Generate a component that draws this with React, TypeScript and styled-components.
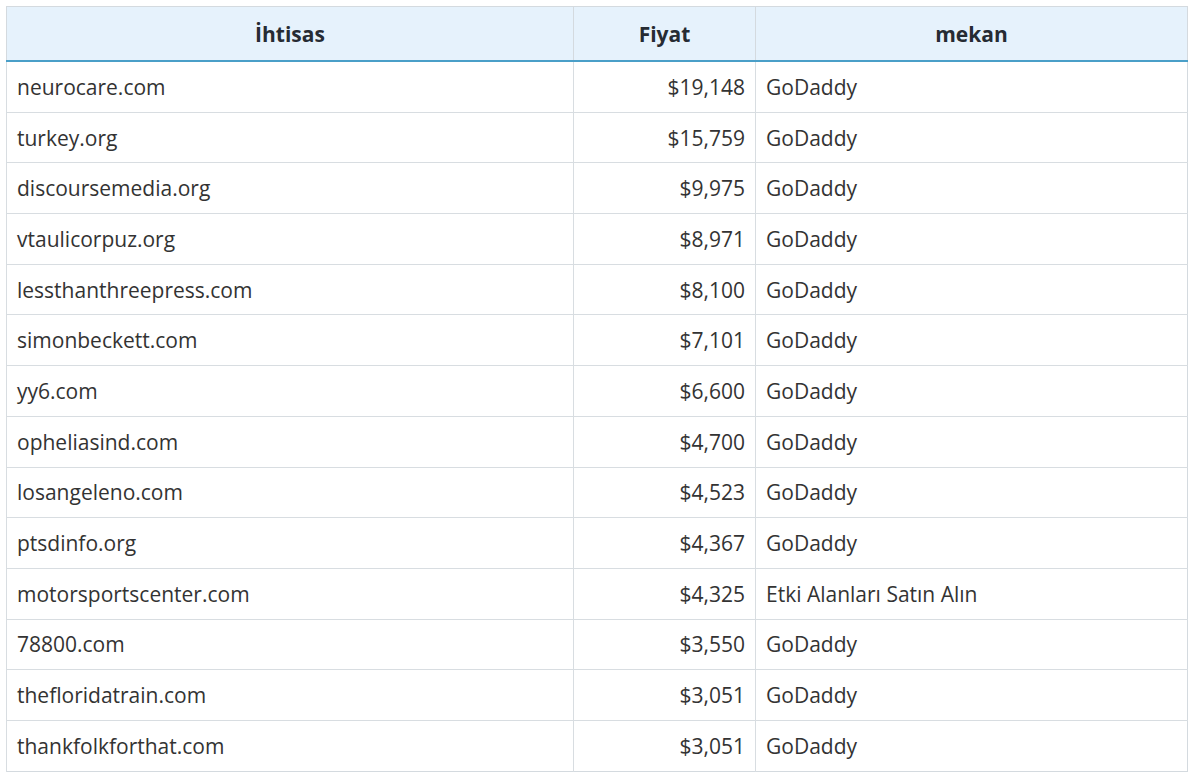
import styled, { createGlobalStyle } from 'styled-components';

const GlobalStyle = createGlobalStyle`
  html, body {
    margin: 0;
    padding: 0;
    background: #ffffff;
  }
  body {
    font-family: "Open Sans", "Liberation Sans", sans-serif;
    color: #333;
  }
`;

const Page = styled.div`
  padding: 6px 12px 0 6px;
`;

const Table = styled.table`
  width: 1182px;
  border-collapse: collapse;
  border: 1px solid #d4dadf;
  table-layout: fixed;
`;

const HeadCell = styled.th<{ $width?: number }>`
  width: ${({ $width }) => ($width ? `${$width}px` : 'auto')};
  height: 53px;
  padding: 0 10px;
  background: #e6f2fc;
  border-left: 1px solid #d4dadf;
  border-bottom: 2px solid #4a9fc8;
  font-size: 21px;
  font-weight: 700;
  color: #262b33;
  text-align: center;
`;

const Row = styled.tr`
  border-top: 1px solid #d8dde1;
`;

const Cell = styled.td<{ $align?: 'left' | 'right' }>`
  height: 49.7px;
  padding: 0 10px;
  border-left: 1px solid #d8dde1;
  font-size: 21px;
  color: #333;
  text-align: ${({ $align }) => $align || 'left'};
  white-space: nowrap;
`;

const rows: [string, string, string][] = [
  ['neurocare.com', '$19,148', 'GoDaddy'],
  ['turkey.org', '$15,759', 'GoDaddy'],
  ['discoursemedia.org', '$9,975', 'GoDaddy'],
  ['vtaulicorpuz.org', '$8,971', 'GoDaddy'],
  ['lessthanthreepress.com', '$8,100', 'GoDaddy'],
  ['simonbeckett.com', '$7,101', 'GoDaddy'],
  ['yy6.com', '$6,600', 'GoDaddy'],
  ['opheliasind.com', '$4,700', 'GoDaddy'],
  ['losangeleno.com', '$4,523', 'GoDaddy'],
  ['ptsdinfo.org', '$4,367', 'GoDaddy'],
  ['motorsportscenter.com', '$4,325', 'Etki Alanları Satın Alın'],
  ['78800.com', '$3,550', 'GoDaddy'],
  ['thefloridatrain.com', '$3,051', 'GoDaddy'],
  ['thankfolkforthat.com', '$3,051', 'GoDaddy'],
];

export default function App() {
  return (
    <>
      <GlobalStyle />
      <Page>
        <Table>
          <thead>
            <tr>
              <HeadCell $width={546}>İhtisas</HeadCell>
              <HeadCell $width={161}>Fiyat</HeadCell>
              <HeadCell>mekan</HeadCell>
            </tr>
          </thead>
          <tbody>
            {rows.map(([domain, price, place]) => (
              <Row key={domain}>
                <Cell>{domain}</Cell>
                <Cell $align="right">{price}</Cell>
                <Cell>{place}</Cell>
              </Row>
            ))}
          </tbody>
        </Table>
      </Page>
    </>
  );
}
